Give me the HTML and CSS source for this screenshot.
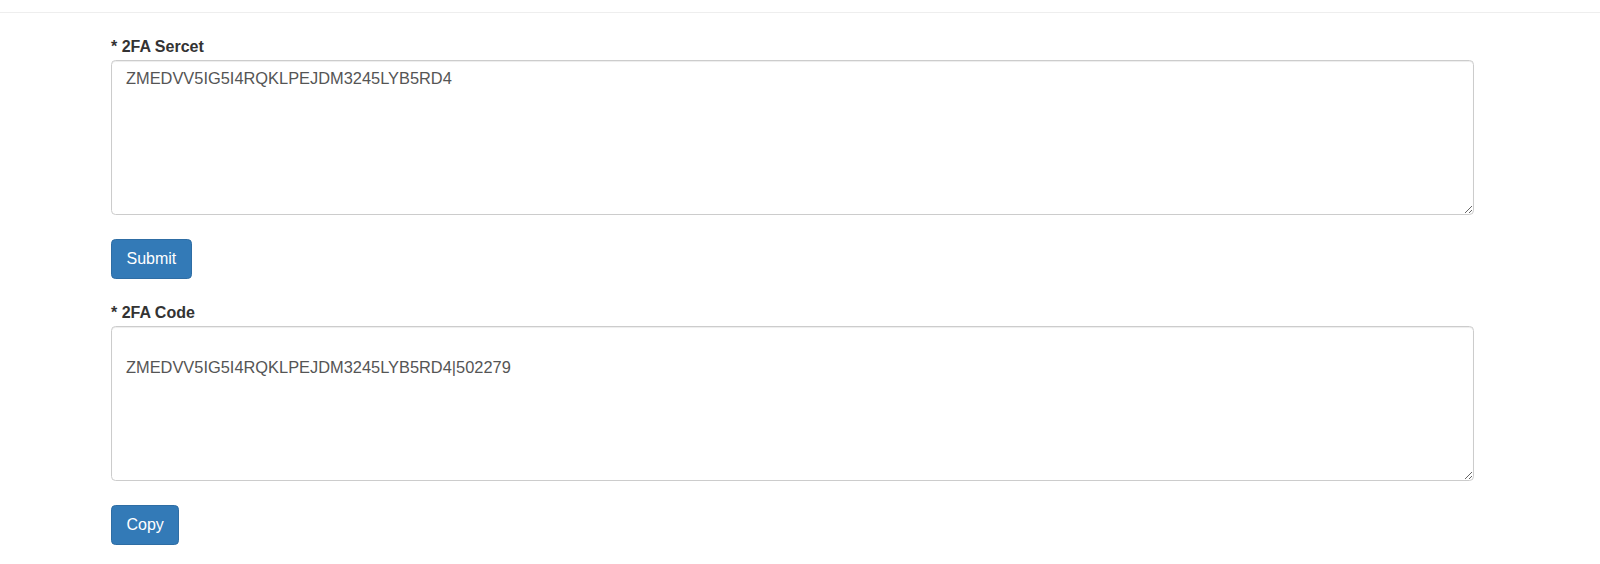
FILE: index.html
```html
<!DOCTYPE html>
<html lang="en">
<head>
<meta charset="utf-8">
<title>2FA</title>
<link rel="stylesheet" href="styles.css">
</head>
<body>
<div class="topbar"></div>
<main class="container">
  <div class="form-group">
    <label class="label" for="secret">* 2FA Sercet</label>
    <textarea id="secret" class="field">ZMEDVV5IG5I4RQKLPEJDM3245LYB5RD4</textarea>
  </div>
  <div class="form-group">
    <button class="btn" type="button">Submit</button>
  </div>
  <div class="form-group">
    <label class="label" for="code">* 2FA Code</label>
    <textarea id="code" class="field">

ZMEDVV5IG5I4RQKLPEJDM3245LYB5RD4|502279</textarea>
  </div>
  <div class="form-group last">
    <button class="btn" type="button">Copy</button>
  </div>
</main>
</body>
</html>
```
FILE: styles.css
```css
html, body {
  margin: 0;
  padding: 0;
  background: #fff;
  overflow: hidden;
}
body {
  font-family: "Liberation Sans", Arial, sans-serif;
  font-size: 16px;
  color: #333;
}
.topbar {
  height: 12px;
  border-bottom: 1px solid #eeeeee;
}
.container {
  display: flex;
  flex-direction: column;
  gap: 24px;
  padding: 24px 126px 0 111px;
}
.form-group {
  display: flex;
  flex-direction: column;
  align-items: flex-start;
}
.label {
  display: block;
  font-weight: bold;
  line-height: 20px;
  margin-bottom: 3px;
}
.field {
  box-sizing: border-box;
  display: block;
  width: 100%;
  height: 155px;
  margin: 0;
  padding: 6px 14px;
  font-family: "Liberation Sans", Arial, sans-serif;
  font-size: 16.4px;
  line-height: 23px;
  color: #555;
  background: #fff;
  border: 1px solid #ccc;
  border-radius: 4.5px;
  box-shadow: inset 0 1px 1px rgba(0, 0, 0, 0.075);
  outline: none;
}
.btn {
  font-family: "Liberation Sans", Arial, sans-serif;
  font-size: 16px;
  line-height: 24px;
  padding: 7px 14.5px;
  color: #fff;
  background: #337ab7;
  border: 1px solid #2e6da4;
  border-radius: 4.5px;
  cursor: pointer;
  margin: 0;
}
```
